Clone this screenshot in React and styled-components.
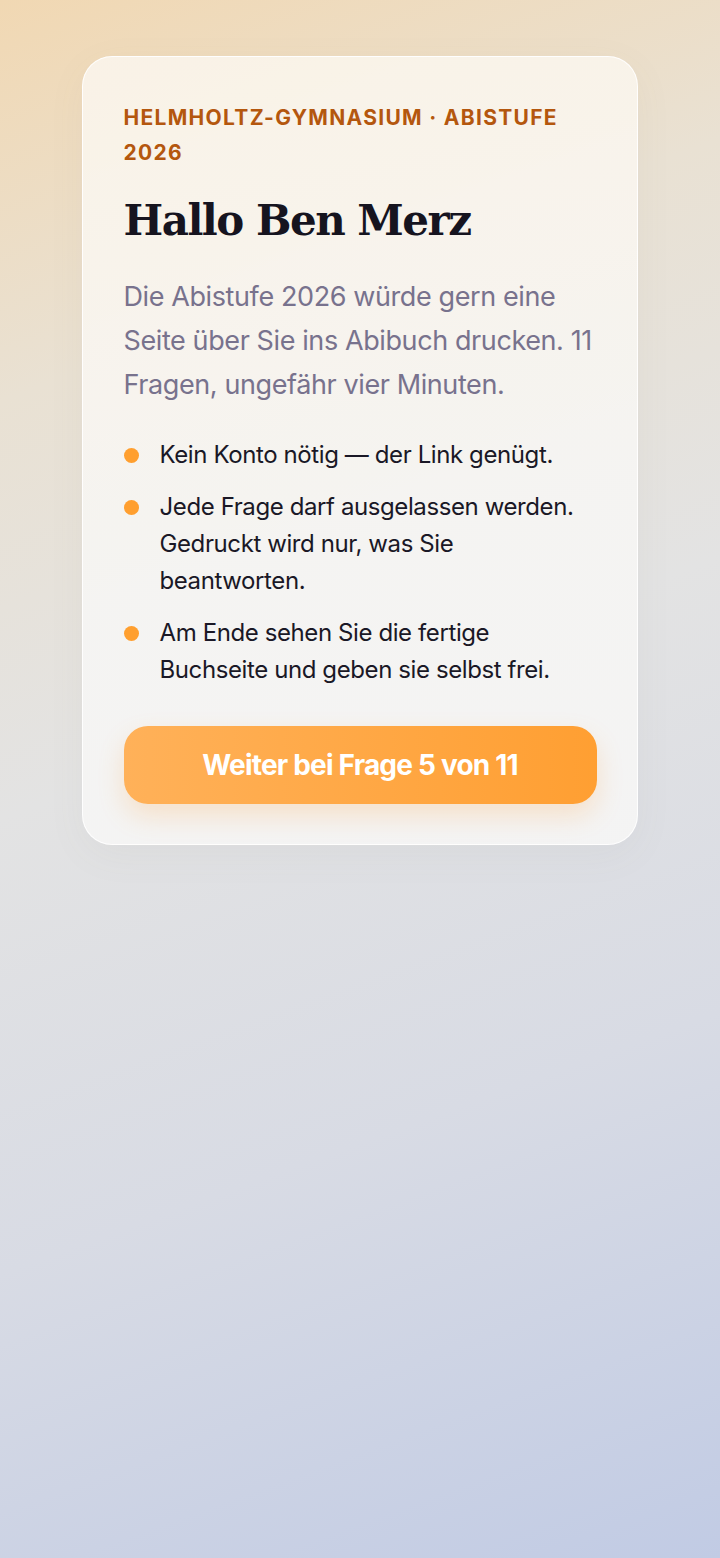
import React from "react";
import styled, { createGlobalStyle } from "styled-components";

const Global = createGlobalStyle`
  html, body { margin: 0; padding: 0; }
  body {
    min-height: 1558px;
    font-family: Inter, "Noto Sans", sans-serif;
    background: linear-gradient(160deg, #f1d8b3 0%, #e9e1d3 22%, #e3e3e3 45%, #d8dbe4 70%, #c1cbe4 100%);
    background-attachment: fixed;
  }
`;

const Page = styled.main`
  min-height: 1558px;
  box-sizing: border-box;
  padding: 56px 82px;
  display: flex;
  flex-direction: column;
  align-items: stretch;
`;

const Card = styled.section`
  box-sizing: border-box;
  width: 556px;
  border-radius: 30px;
  border: 1.5px solid rgba(255, 255, 255, 0.9);
  background: linear-gradient(170deg, rgba(250, 244, 234, 0.92) 0%, rgba(246, 245, 243, 0.92) 60%, rgba(245, 245, 245, 0.92) 100%);
  padding: 42.5px 40.5px 40px;
  box-shadow: 0 10px 40px rgba(120, 110, 100, 0.05);
`;

const Eyebrow = styled.div`
  font-family: Inter, sans-serif;
  font-weight: 700;
  font-size: 21px;
  line-height: 35px;
  letter-spacing: 1.3px;
  text-transform: uppercase;
  color: #b4570e;
`;

const Title = styled.h1`
  margin: 26.5px 0 0;
  font-family: "DejaVu Serif", "Liberation Serif", serif;
  font-weight: 700;
  font-size: 42px;
  line-height: 50px;
  letter-spacing: -1.5px;
  color: #16141f;
`;

const Lead = styled.p`
  margin: 28.5px 0 0;
  font-family: Inter, sans-serif;
  font-size: 27px;
  line-height: 44px;
  letter-spacing: -0.4px;
  color: #78728d;
`;

const List = styled.ul`
  list-style: none;
  margin: 29px 0 0;
  padding: 0;
  display: flex;
  flex-direction: column;
  gap: 15px;
`;

const Item = styled.li`
  display: flex;
  align-items: flex-start;
  gap: 21px;
  font-family: Inter, sans-serif;
  font-size: 24px;
  line-height: 37px;
  letter-spacing: -0.4px;
  color: #1a1826;
`;

const Dot = styled.span`
  flex: none;
  width: 15px;
  height: 15px;
  margin-top: 12px;
  border-radius: 50%;
  background: #ff9f2f;
`;

const Button = styled.button`
  margin-top: 38px;
  width: 100%;
  height: 78px;
  border: none;
  border-radius: 24px;
  background: linear-gradient(90deg, #ffb159 0%, #ff9f32 100%);
  color: #ffffff;
  font-family: Inter, sans-serif;
  font-weight: 700;
  font-size: 28px;
  letter-spacing: -0.8px;
  box-shadow: 0 12px 26px rgba(255, 160, 60, 0.22);
  cursor: pointer;
`;

const items = [
  "Kein Konto nötig — der Link genügt.",
  "Jede Frage darf ausgelassen werden. Gedruckt wird nur, was Sie beantworten.",
  "Am Ende sehen Sie die fertige Buchseite und geben sie selbst frei.",
];

export default function App() {
  return (
    <>
      <Global />
      <Page>
        <Card>
          <Eyebrow>Helmholtz-Gymnasium · Abistufe 2026</Eyebrow>
          <Title>Hallo Ben Merz</Title>
          <Lead>
            Die Abistufe 2026 würde gern eine Seite über Sie ins Abibuch drucken. 11 Fragen, ungefähr vier Minuten.
          </Lead>
          <List>
            {items.map((t) => (
              <Item key={t}>
                <Dot />
                <span>{t}</span>
              </Item>
            ))}
          </List>
          <Button>Weiter bei Frage 5 von 11</Button>
        </Card>
      </Page>
    </>
  );
}
